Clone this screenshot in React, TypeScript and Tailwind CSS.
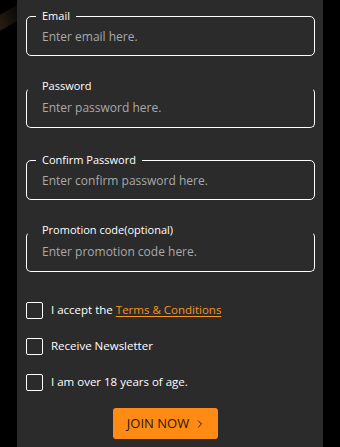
import { ChevronRight } from 'lucide-react'

type Field = { label: string; placeholder: string; legend: boolean }

const fields: Field[] = [
  { label: 'Email', placeholder: 'Enter email here.', legend: true },
  { label: 'Password', placeholder: 'Enter password here.', legend: false },
  { label: 'Confirm Password', placeholder: 'Enter confirm password here.', legend: true },
  { label: 'Promotion code(optional)', placeholder: 'Enter promotion code here.', legend: false },
]

function InputField({ field }: { field: Field }) {
  if (field.legend) {
    return (
      <fieldset className="h-[46px] rounded-[5px] border border-white px-[15px] pb-0 -mt-[6px]">
        <legend className="px-[6px] -ml-[6px] text-[11px] leading-[12px] text-white">{field.label}</legend>
        <input
          placeholder={field.placeholder}
          className="w-full h-[28px] mt-[0px] bg-transparent text-[12px] text-white placeholder:text-[#a9a9a9] outline-none"
        />
      </fieldset>
    )
  }
  return (
    <div className="relative h-[40px] rounded-[5px] border border-white border-t-white/0 px-[15px] flex items-center">
      <span className="absolute left-[15px] -top-[9px] text-[11px] leading-[12px] text-white">{field.label}</span>
      <input
        placeholder={field.placeholder}
        className="w-full h-[28px] mt-[-1px] bg-transparent text-[12px] text-white placeholder:text-[#a9a9a9] outline-none"
      />
    </div>
  )
}

function Check({ children }: { children: React.ReactNode }) {
  return (
    <label className="flex items-center gap-[8px] h-[18px]">
      <span className="w-[17px] h-[17px] rounded-[2px] border border-white shrink-0" />
      <span className="text-[11.5px] text-white">{children}</span>
    </label>
  )
}

export default function App() {
  return (
    <div
      className="w-[340px] h-[447px] bg-black flex justify-center overflow-hidden relative"
      style={{ fontFamily: '"Open Sans", "Noto Sans", sans-serif' }}
    >
      {/* backdrop streak on the left edge */}
      <div className="absolute -left-[10px] top-[10px] w-[40px] h-[14px] -rotate-[30deg] bg-gradient-to-r from-[#3a2a1c] to-transparent opacity-80" />
      <div className="relative w-[306px] h-full bg-[#2b2b2b] px-[9px] pt-[16px]">
        <div className="flex flex-col gap-[32px] w-[289px]">
          {fields.map(f => (
            <InputField key={f.label} field={f} />
          ))}
        </div>
        <div className="flex flex-col gap-[18px] mt-[29px]">
          <Check>
            I accept the{' '}
            <a className="text-[#f7931e] underline underline-offset-2">Terms &amp; Conditions</a>
          </Check>
          <Check>Receive Newsletter</Check>
          <Check>I am over 18 years of age.</Check>
        </div>
        <div className="flex mt-[17px] ml-[87px]">
          <button className="w-[105px] h-[31px] rounded-[3px] bg-[#ff8a14] text-[#2a1706] text-[13px] flex items-center justify-center gap-[5px] pl-[2px]">
            JOIN NOW
            <ChevronRight size={12} strokeWidth={2} />
          </button>
        </div>
      </div>
    </div>
  )
}
